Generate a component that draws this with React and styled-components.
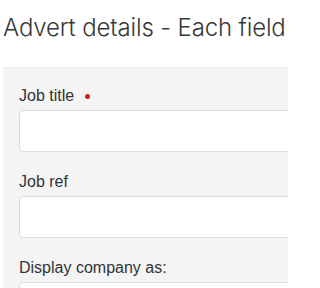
import styled, { createGlobalStyle } from "styled-components";

const GlobalStyle = createGlobalStyle`
  html, body {
    margin: 0;
    padding: 0;
    background: #ffffff;
    overflow: hidden;
  }
`;

const Page = styled.div`
  width: 288px;
  height: 288px;
  overflow: hidden;
  padding-left: 3px;
  box-sizing: border-box;
`;

const Heading = styled.h2`
  margin: 0;
  padding-top: 14px;
  height: 67px;
  box-sizing: border-box;
  font-family: Inter, Lato, sans-serif;
  font-weight: 300;
  font-size: 24px;
  line-height: 28px;
  letter-spacing: -0.15px;
  color: #383838;
  white-space: nowrap;
  font-variant-ligatures: none;
`;

const Panel = styled.div`
  width: 700px;
  background: #f4f4f4;
  border-top: 1px solid #ececec;
  padding: 18px 16px;
  display: flex;
  flex-direction: column;
  gap: 20px;
`;

const Field = styled.div`
  display: flex;
  flex-direction: column;
  gap: 4px;
`;

const Label = styled.label`
  display: flex;
  align-items: center;
  gap: 11px;
  font-family: "Liberation Sans", Arial, sans-serif;
  font-size: 16px;
  line-height: 20px;
  color: #333333;
`;

const Required = styled.span`
  width: 5px;
  height: 5px;
  border-radius: 50%;
  background: #c8201e;
  margin-top: 1px;
`;

const Input = styled.input`
  box-sizing: border-box;
  height: 42px;
  width: 100%;
  background: #ffffff;
  border: 1px solid #dcdcdc;
  border-radius: 4px;
  font-family: "Liberation Sans", Arial, sans-serif;
  font-size: 16px;
  padding: 0 10px;
  outline: none;
`;

const fields = [
  { label: "Job title", required: true },
  { label: "Job ref" },
  { label: "Display company as:" },
];

const App = () => {
  return (
    <Page>
      <GlobalStyle />
      <Heading>Advert details - Each field</Heading>
      <Panel>
        {fields.map((f) => (
          <Field key={f.label}>
            <Label>
              {f.label}
              {f.required && <Required />}
            </Label>
            <Input type="text" />
          </Field>
        ))}
      </Panel>
    </Page>
  );
};

export default App;
